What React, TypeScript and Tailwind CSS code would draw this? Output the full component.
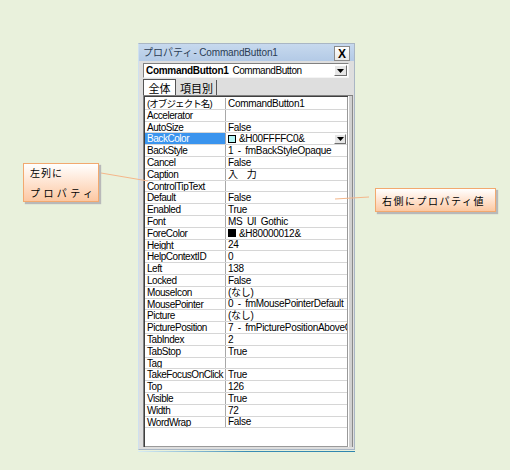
import React from "react";

type Row = { name: string; value: string; kind?: "backcolor" | "forecolor" | "spaced" };

const rows: Row[] = [
  { name: "(オブジェクト名)", value: "CommandButton1" },
  { name: "Accelerator", value: "" },
  { name: "AutoSize", value: "False" },
  { name: "BackColor", value: "&H00FFFFC0&", kind: "backcolor" },
  { name: "BackStyle", value: "1 - fmBackStyleOpaque" },
  { name: "Cancel", value: "False" },
  { name: "Caption", value: "入 力", kind: "spaced" },
  { name: "ControlTipText", value: "" },
  { name: "Default", value: "False" },
  { name: "Enabled", value: "True" },
  { name: "Font", value: "MS UI Gothic" },
  { name: "ForeColor", value: "&H80000012&", kind: "forecolor" },
  { name: "Height", value: "24" },
  { name: "HelpContextID", value: "0" },
  { name: "Left", value: "138" },
  { name: "Locked", value: "False" },
  { name: "MouseIcon", value: "(なし)" },
  { name: "MousePointer", value: "0 - fmMousePointerDefault" },
  { name: "Picture", value: "(なし)" },
  { name: "PicturePosition", value: "7 - fmPicturePositionAboveCenter" },
  { name: "TabIndex", value: "2" },
  { name: "TabStop", value: "True" },
  { name: "Tag", value: "" },
  { name: "TakeFocusOnClick", value: "True" },
  { name: "Top", value: "126" },
  { name: "Visible", value: "True" },
  { name: "Width", value: "72" },
  { name: "WordWrap", value: "False" },
];

function DropButton({ className = "" }: { className?: string }) {
  return (
    <div
      className={`flex items-center justify-center bg-[#e6e6e6] border border-t-white border-l-white border-r-[#6e6e6e] border-b-[#6e6e6e] ${className}`}
    >
      <svg width="7" height="4" viewBox="0 0 7 4">
        <path d="M0 0h7L3.5 4z" fill="#000" />
      </svg>
    </div>
  );
}

function PropRow({ row, first }: { row: Row; first: boolean }) {
  const selected = row.kind === "backcolor";
  return (
    <div className="flex h-[11.8px] border-b border-[#d6d6d6] leading-[11px]">
      <div
        className={`w-[81px] shrink-0 pl-[2px] border-r border-[#a8a8a8] whitespace-nowrap overflow-hidden ${
          first ? "text-[9.5px] tracking-[-0.9px]" : "tracking-[-0.45px]"
        } ${selected ? "bg-[#3a94ee] text-white" : "text-black"}`}
      >
        {row.name}
      </div>
      <div className="flex-1 min-w-0 flex items-center pl-[2px] whitespace-nowrap overflow-hidden text-black tracking-[-0.3px] [word-spacing:2px]">
        {row.kind === "backcolor" && (
          <span className="w-[8px] h-[8px] mr-[3px] border border-black bg-[#b4f6f6] shrink-0" />
        )}
        {row.kind === "forecolor" && (
          <span className="w-[8px] h-[8px] mr-[3px] bg-black shrink-0" />
        )}
        <span className={row.kind === "spaced" ? "tracking-[2px]" : ""}>{row.value}</span>
        {row.kind === "backcolor" && <DropButton className="ml-auto mr-[1px] w-[12px] h-[10px] shrink-0" />}
      </div>
    </div>
  );
}

export default function App() {
  return (
    <div className="relative w-[510px] h-[470px] overflow-hidden bg-[#e9f1dc] pt-[43px] pl-[138px] font-['Liberation_Sans','Noto_Sans_CJK_JP',sans-serif]">
      {/* properties window */}
      <div className="w-[217px] h-[407px] flex flex-col border border-[#a9b6c4] border-l-[#cfe0ef] bg-[#dedede]">
        <div className="h-[17px] flex items-center bg-gradient-to-b from-[#c7d9ee] to-[#b3cae6] pl-[4px] pr-[4px] whitespace-nowrap">
          <span className="text-[10px] text-[#2a3c54]">プロパティ</span>
          <span className="text-[10px] text-[#2a3c54] tracking-[-0.15px] ml-[1px]">- CommandButton1</span>
          <div className="ml-auto w-[16px] h-[15px] mt-[2px] flex items-center justify-center bg-gradient-to-b from-white to-[#e8e8e8] border border-[#8a8a8a] text-[12px] font-bold leading-none">
            X
          </div>
        </div>

        <div className="mt-[2px] ml-[4px] mr-[5px] h-[15px] flex items-center bg-white border border-t-[#808080] border-l-[#808080] border-r-[#f4f4f4] border-b-[#f4f4f4] pl-[2px] text-[10px] whitespace-nowrap">
          <span className="font-bold tracking-[-0.3px]">CommandButton1</span>
          <span className="ml-[4px] tracking-[-0.45px]">CommandButton</span>
          <DropButton className="ml-auto mr-[1px] w-[13px] h-[11px]" />
        </div>

        <div className="mt-[1px] ml-[4px] h-[16px] flex items-end text-[11px] font-['Noto_Sans_CJK_JP',sans-serif] leading-[14px]">
          <div className="h-[16px] w-[33px] flex items-center justify-center bg-white border border-[#555] border-b-0">
            全体
          </div>
          <div className="h-[15px] px-[3px] ml-[1px] flex items-center border-r border-[#555]">項目別</div>
        </div>

        <div className="ml-[4px] mr-[1px] h-[352px] flex border-t border-l border-[#808080] bg-[#d8d8d8]">
          <div className="flex-1 min-w-0 flex flex-col border-t border-l border-[#404040] bg-white text-[10px]">
            <div className="flex-1 flex flex-col pt-[1px] border-r border-b border-[#9a9a9a]">
              {rows.map((r, i) => (
                <PropRow key={r.name} row={r} first={i === 0} />
              ))}
            </div>
          </div>
          <div className="w-[5px] border-l border-white border-r border-r-[#8a8a8a] bg-[#d0d0d0]" />
        </div>
      </div>
      <div className="w-[217px] h-px mt-[1px] bg-gradient-to-r from-[#d8ecf4] via-[#3a8db4] to-[#2f86ae]" />

      {/* connector lines */}
      <svg className="absolute left-0 top-0 pointer-events-none" width="510" height="470">
        <line x1="101" y1="173" x2="148" y2="181" stroke="#f5b78a" strokeWidth="1" />
        <line x1="335" y1="199" x2="369" y2="197" stroke="#f5b78a" strokeWidth="1" />
      </svg>

      {/* left callout */}
      <div className="absolute left-[23px] top-[163px] w-[76px] h-[39px] flex flex-col justify-center pl-[6px] gap-[8px] bg-gradient-to-b from-white to-[#fcc8a2] border border-[#f2a96f] shadow-[2px_2px_1px_#b9b9b9] text-[10px] leading-[12px] text-black whitespace-nowrap font-['Noto_Sans_CJK_JP',sans-serif]">
        <span className="tracking-[1px]">左列に</span>
        <span className="tracking-[3.4px]">プロパティ</span>
      </div>

      {/* right callout */}
      <div className="absolute left-[375px] top-[188px] w-[121px] h-[24px] flex items-center pl-[6px] bg-gradient-to-b from-white to-[#fcc8a2] border border-[#f2a96f] shadow-[2px_2px_1px_#b9b9b9] text-[10px] text-black tracking-[1.5px] whitespace-nowrap font-['Noto_Sans_CJK_JP',sans-serif]">
        右側にプロパティ値
      </div>
    </div>
  );
}
